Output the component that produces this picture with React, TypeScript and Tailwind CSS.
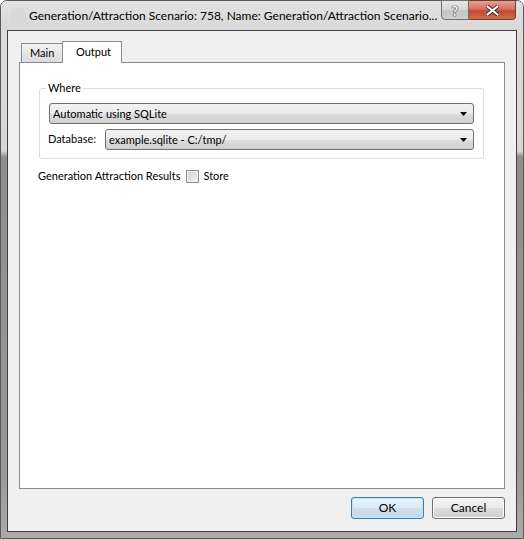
import React from "react";

const font = "font-['Lato',sans-serif] text-[12px] text-black";

function Combo({ text, className }: { text: string; className?: string }) {
  return (
    <div
      className={
        "h-[21px] flex items-center justify-between rounded-[3px] border border-[#707070] bg-[linear-gradient(to_bottom,#f2f2f2_0%,#ebebeb_50%,#dddddd_51%,#cfcfcf_100%)] pl-[3px] pr-[6px] " +
        (className ?? "")
      }
    >
      <span className="leading-none">{text}</span>
      <svg width="7" height="4" viewBox="0 0 7 4">
        <path d="M0 0h7L3.5 4z" fill="#000" />
      </svg>
    </div>
  );
}

function Button({ label, focus }: { label: string; focus?: boolean }) {
  return (
    <button
      className={
        "w-[73px] h-[22px] rounded-[3px] border leading-none " +
        (focus
          ? "border-[#3c7fb1] bg-[linear-gradient(to_bottom,#eaf3f9_0%,#dde9f2_50%,#cddfec_51%,#c3d8e8_100%)] shadow-[inset_0_0_0_1px_#c4e5f6]"
          : "border-[#707070] bg-[linear-gradient(to_bottom,#f2f2f2_0%,#ebebeb_50%,#dddddd_51%,#cfcfcf_100%)] shadow-[inset_0_0_0_1px_#fcfcfc]")
      }
    >
      {label}
    </button>
  );
}

export default function App() {
  return (
    <div className={"w-[524px] h-[539px] " + font}>
      <div className="relative w-full h-full rounded-t-[7px] border border-[#5a5a5a] bg-[linear-gradient(to_bottom,#dedede_0px,#d6d6d6_150px,#8e8e8e_156px,#999999_470px,#ababab_538px)] flex flex-col">
        {/* caption */}
        <div className="h-[29px] flex items-center pl-[28px] pt-[1px] bg-[linear-gradient(to_bottom,#e2e2e2,#d8d8d8)] rounded-t-[6px]">
          <div className="absolute left-[10px] top-[7px] w-[14px] h-[16px] rounded-[3px] bg-[#d6d6d6] opacity-70" />
          <span className="whitespace-nowrap">
            Generation/Attraction Scenario: 758, Name: Generation/Attraction Scenario...
          </span>
        </div>

        {/* help + close buttons */}
        <div className="absolute right-[7px] top-[-1px] flex">
          <div className="w-[28px] h-[20px] rounded-bl-[4px] border border-[#6f6f6f] bg-[linear-gradient(to_bottom,#e8e8e8_0%,#d6d6d6_50%,#c4c4c4_51%,#cfcfcf_100%)] flex items-center justify-center text-[14px] font-bold text-[#f8f8f8] [text-shadow:0_0_1px_#303030,0_0_1px_#303030,0_0_1px_#303030]">
            ?
          </div>
          <div className="w-[47px] h-[20px] rounded-br-[4px] border border-l-0 border-[#6f3a30] bg-[linear-gradient(to_bottom,#e0a196_0%,#d4705f_45%,#c14a2f_55%,#d26a4f_100%)] flex items-center justify-center">
            <svg width="13" height="11" viewBox="0 0 13 11">
              <path
                d="M1.5 1.5l10 8M11.5 1.5l-10 8"
                stroke="#3a2a28"
                strokeWidth="4"
                strokeLinecap="square"
              />
              <path
                d="M1.5 1.5l10 8M11.5 1.5l-10 8"
                stroke="#fff"
                strokeWidth="2"
                strokeLinecap="square"
              />
            </svg>
          </div>
        </div>

        {/* client area */}
        <div className="mx-[6px] mb-[6px] flex-1 border border-[#404040] bg-[#f0f0f0] flex flex-col px-[11px] pt-[10px] pb-[12px] text-[11px]">
          {/* tabs */}
          <div className="flex items-end h-[21px] pl-[2px]">
            <div className="w-[42px] h-[19px] border border-b-0 border-[#898c95] bg-[linear-gradient(to_bottom,#f2f2f2,#dcdcdc)] flex items-center pl-[8px]">
              Main
            </div>
            <div className="relative w-[60px] h-[22px] -ml-[1px] mb-[-1px] z-10 border border-b-0 border-[#898c95] bg-white flex items-center pl-[13px]">
              Output
            </div>
          </div>
          <div className="flex-1 border border-[#898c95] bg-white flex flex-col pt-[25px] pl-[19px] pr-[20px]">
            {/* group box */}
            <div className="relative h-[71px] rounded-[3px] border border-[#d5dfe5] px-[9px] pt-[14px] flex flex-col gap-[5px]">
              <span className="absolute left-[6px] top-[-9px] bg-white px-[2px] leading-[16px]">
                Where
              </span>
              <Combo text="Automatic using SQLite" />
              <div className="flex items-center">
                <span className="w-[57px] -ml-[1px]">Database:</span>
                <Combo text="example.sqlite - C:/tmp/" className="flex-1" />
              </div>
            </div>
            <div className="flex items-center mt-[9px] h-[16px] -ml-px">
              <span>Generation Attraction Results</span>
              <span className="ml-[6px] w-[13px] h-[13px] border border-[#8e8f8f] bg-[linear-gradient(135deg,#cbcfd5,#f6f6f6)] shadow-[inset_0_0_0_1px_#f4f4f4]" />
              <span className="ml-[4px]">Store</span>
            </div>
          </div>
          {/* buttons */}
          <div className="flex justify-end gap-[8px] mt-[8px] text-[12px]">
            <Button label="OK" focus />
            <Button label="Cancel" />
          </div>
        </div>
      </div>
    </div>
  );
}
